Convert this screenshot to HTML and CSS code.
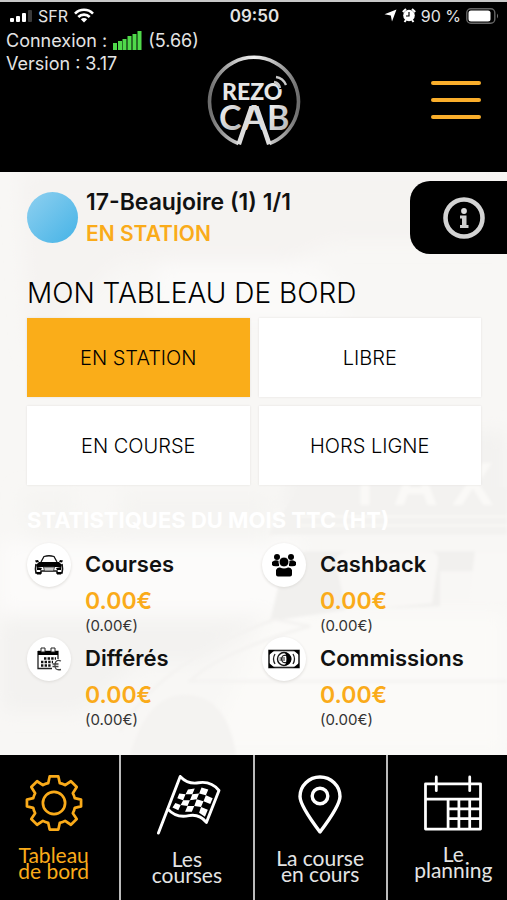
FILE: index.html
```html
<!DOCTYPE html>
<html lang="fr">
<head>
<meta charset="utf-8">
<meta name="viewport" content="width=device-width, initial-scale=1">
<title>Rezo Cab</title>
<link rel="stylesheet" href="styles.css">
</head>
<body>
<header class="header">
  <div class="status">
    <div class="status-side">
      <svg class="bars" viewBox="0 0 22 12" width="22" height="12" fill="#fff"><rect y="8" width="4" height="4" rx="1"/><rect x="6" y="6" width="4" height="6" rx="1"/><rect x="12" y="3" width="4" height="9" rx="1"/><rect x="18" width="4" height="12" rx="1" fill="#3a3a3a"/></svg>
      <span>SFR</span>
      <svg viewBox="0 0 20 15" width="20" height="15" fill="none" stroke="#fff" stroke-width="2.6"><path d="M1 5.6a12.6 12.6 0 0 1 18 0M4.3 9a8 8 0 0 1 11.4 0"/><path d="M10 14.500L6.800 11.300a4.500 4.500 0 0 1 6.400 0z" fill="#fff" stroke="none"/></svg>
    </div>
    <time class="clock">09:50</time>
    <div class="status-side status-right">
      <svg viewBox="0 0 13 13" width="13" height="13" fill="#fff"><path d="M12.500.5L8 12.500 6.800 6.500.5 5.300z"/></svg>
      <svg viewBox="0 0 14 15" width="14" height="15"><circle cx="7" cy="7.500" r="5.800" fill="#fff"/><path d="M.8 4L4 1M13.200 4L10 1M2.500 14l1.500-2M11.500 14L10 12" stroke="#fff" stroke-width="2"/><path d="M7 4v4H4" stroke="#000" fill="none" stroke-width="1.200"/></svg>
      <span>90 %</span>
      <svg viewBox="0 0 33 16" width="33" height="16"><rect x=".8" y=".8" width="28" height="14.400" rx="4" fill="none" stroke="#666" stroke-width="1.400"/><rect x="2.500" y="2.500" width="22" height="11" rx="2.500" fill="#fff"/><path d="M31 5.500q2 2.500 0 5z" fill="#777"/></svg>
    </div>
  </div>
  <div class="conn">
    <div class="conn-row"><span>Connexion :</span>
      <svg viewBox="0 0 29 19" width="29" height="19" fill="#4fd94a"><rect y="12" width="4" height="7"/><rect x="5" y="10" width="4" height="9"/><rect x="9.500" y="8" width="4" height="11"/><rect x="14.500" y="5" width="4" height="14"/><rect x="19.500" y="3" width="4" height="16"/><rect x="24.500" width="4" height="19"/></svg>
      <span>(5.66)</span></div>
    <div class="conn-row">Version : 3.17</div>
  </div>
  <svg class="logo" viewBox="0 0 94 94" width="94" height="94" role="img" aria-label="Rezo Cab">
    <defs><linearGradient id="metal" x1="0" y1="0" x2="1" y2="0"><stop offset="0" stop-color="#6d6d6d"/><stop offset=".3" stop-color="#c9c9c9"/><stop offset=".5" stop-color="#f1f1f1"/><stop offset=".7" stop-color="#c4c4c4"/><stop offset="1" stop-color="#6d6d6d"/></linearGradient>
    <linearGradient id="metal2" x1="0" y1="0" x2="1" y2="1"><stop offset="0" stop-color="#fff"/><stop offset="1" stop-color="#aaa"/></linearGradient></defs>
    <path d="M31.500 89.500A44.500 44.500 0 1 1 62.500 89.500" fill="none" stroke="url(#metal)" stroke-width="3.600"/>
    <text x="15" y="46" class="logo-rezo" fill="#e6e6e6">REZO</text>
    <text x="12" y="76" class="logo-cab" fill="url(#metal2)">C</text>
    <text x="60" y="76" class="logo-cab" fill="url(#metal2)">B</text>
    <text x="47" y="76" class="logo-cab logo-a" fill="#dedede">A</text>
    <path d="M42.500 52h4.500L34 91l-4.500-1.500zM51.500 52H47l13 39 4.500-1.500z" fill="#dedede"/>
    <path d="M65 27q8 1 9 8" fill="none" stroke="#000" stroke-width="3"/>
    <path d="M67 28q5 1 6 6M69 23q7 1 10 8" fill="none" stroke="#c9c9c9" stroke-width="2.400"/>
  </svg>
  <button class="menu" aria-label="Menu"><i></i><i></i><i></i></button>
</header>

<main class="main">
  <svg class="backdrop" viewBox="0 0 507 584" preserveAspectRatio="none" aria-hidden="true">
    <defs><filter id="soft"><feGaussianBlur stdDeviation="9"/></filter><filter id="edge"><feGaussianBlur stdDeviation="1.500"/></filter></defs>
    <rect width="507" height="584" fill="#f8f7f5"/>
    <g filter="url(#soft)">
      <path d="M20 0H507V70H330L290 90H120L30 180z" fill="#f5f3f1"/>
      <path d="M160 90H290Q340 90 345 150H150z" fill="#fbfaf9"/>
      <path d="M20 320H75V350H120V320H270V380L30 370z" fill="#f5f4f2"/>
      <path d="M0 450H260L200 490H140L80 540H0z" fill="#f3f2f0"/>
      <path d="M0 370H300V440H0z" fill="#fcfbfa"/>
      <path d="M270 440H507V584H200z" fill="#fbfaf8"/>
      <path d="M300 260H507V340H280z" fill="#f3f2f0"/>
    </g>
    <g filter="url(#edge)">
      <path d="M300 316H507V363H268z" fill="#f3f2f0"/>
      <path d="M304 380H507V400H440V435L350 438 270 450 282 400z" fill="#f1f0ee"/>
      <path d="M336 392q1-12 14-12h78q12 0 10 12l-6 40-86 8z" fill="#f9f8f6"/>
      <path d="M475 380h32v50h-38z" fill="#f9f8f6"/>
      <path d="M300 345H507M300 354H507" stroke="#f9f8f6" stroke-width="2"/>
      <path d="M120 560Q160 490 275 448L310 455Q220 480 190 510H507" fill="none" stroke="#f4f3f1" stroke-width="3"/>
      <path d="M130 584q18-64 60-60 38 4 46 60z" fill="#f4f3f1"/>
      <text x="346" y="334" class="taxi">TAX</text>
    </g>
  </svg>

  <section class="station">
    <span class="dot"></span>
    <div class="station-text"><strong class="place">17-Beaujoire (1) 1/1</strong><strong class="amber">EN STATION</strong></div>
    <button class="info" aria-label="Informations">
      <svg viewBox="0 0 44 44" width="44" height="44"><circle cx="22" cy="22" r="18.500" fill="none" stroke="#d4d4d4" stroke-width="4.600"/><circle cx="22" cy="15" r="2.900" fill="#ddd"/><path d="M18 19.500h6.500v9.500h2v3h-8.500v-3h2v-6.500h-2z" fill="#cfcfcf"/></svg>
    </button>
  </section>

  <h1 class="title">MON TABLEAU DE BORD</h1>
  <div class="modes">
    <button class="mode active">EN STATION</button>
    <button class="mode">LIBRE</button>
    <button class="mode">EN COURSE</button>
    <button class="mode">HORS LIGNE</button>
  </div>

  <h2 class="stats-title">STATISTIQUES DU MOIS TTC (HT)</h2>
  <div class="stats">
    <article class="stat">
      <span class="badge"><svg viewBox="0 0 30 22" width="30" height="22"><path d="M7 8l3-5.500q5-1.500 10 0L23 8" fill="none" stroke="#111" stroke-width="1.300"/><path d="M5 8h20l3 3-1 2H3l-1-2z" fill="#000"/><path d="M1 6.500l3-.5 1 2-3 .500zM29 6.500l-3-.5-1 2 3 .500z"/><path d="M2 10q-1 5 0 9h5v-2h16v2h5q1-4 0-9" fill="none" stroke="#111" stroke-width="1.600"/><path d="M9.500 13h11l-1 4h-9z" fill="#ccc" stroke="#333" stroke-width=".8"/><path d="M3 13l5 1-1 2H3zM27 13l-5 1 1 2h4zM2 18h5v2.500H3zM28 18h-5v2.500h4z"/></svg></span>
      <div><h3>Courses</h3><p class="amount">0.00€</p><p class="net">(0.00€)</p></div>
    </article>
    <article class="stat">
      <span class="badge"><svg viewBox="0 0 26 24" width="26" height="24"><circle cx="6" cy="4" r="3"/><circle cx="20" cy="4" r="3"/><path d="M1 9q3-3 7-1v5q-6 1-7-1zM25 9q-3-3-7-1v5q6 1 7-1z"/><circle cx="13" cy="9" r="5" stroke="#fff" stroke-width="1"/><path d="M5 17q1-3 4-2.500 4 2 8 0 3-.5 4 2.500v4.500q0 2-2 2H7q-2 0-2-2z"/></svg></span>
      <div><h3>Cashback</h3><p class="amount">0.00€</p><p class="net">(0.00€)</p></div>
    </article>
    <article class="stat">
      <span class="badge"><svg viewBox="0 0 26 26" width="26" height="26"><path d="M2 5.500h20V13M2 5v17.500h14" fill="none" stroke="#222" stroke-width="1.300"/><path d="M2 5h20v4H2z"/><path d="M5 2h4v4H5zM15 2h4v4h-4z" fill="#fff" stroke="#222"/><path d="M8 12.500h12M5 16h12M5 19.500h10" stroke="#111" stroke-width="2.400" stroke-dasharray="2.400 1.200"/><path d="M25 15q-5-2-6 3-1 7 6 5.500M16.500 18h6M16.500 20.500h6" fill="none" stroke="#444" stroke-width="1.300"/></svg></span>
      <div><h3>Différés</h3><p class="amount">0.00€</p><p class="net">(0.00€)</p></div>
    </article>
    <article class="stat">
      <span class="badge"><svg viewBox="0 0 32 20" width="32" height="20"><rect x="1" y="1.500" width="30" height="17" fill="#fff" stroke="#222" stroke-width="1.600"/><path d="M1 1h6L1 6zM31 1h-6l6 5zM1 19h6l-6-5zM31 19h-6l6-5z"/><path d="M7 5q-3 5 0 10M25 5q3 5 0 10" fill="none" stroke="#222" stroke-width="1.300"/><circle cx="16" cy="10" r="6.500" fill="#fff" stroke="#111" stroke-width="1.400"/><path d="M17 3.500a6.500 6.500 0 0 1 0 13q3-6 0-13z"/><path d="M18 6.500q-4-1-4.500 3.500.5 4.500 4.500 3.500M11.500 9H17M11.500 11H17" fill="none" stroke="#222" stroke-width="1.200"/></svg></span>
      <div><h3>Commissions</h3><p class="amount">0.00€</p><p class="net">(0.00€)</p></div>
    </article>
  </div>
</main>

<nav class="tabs">
  <a href="#tableau" class="tab current">
    <svg viewBox="0 0 60 60" width="58" height="58" fill="none" stroke="#faab1a" stroke-width="2.800" stroke-linejoin="round"><circle cx="30" cy="30" r="11.500"/><path d="M25.500 2.500h9l1.500 7q3 .5 5.500 2l6-4 6 6-4 6.500q1.500 2.500 2 5l6.500 1.500v7l-6.500 1.500q-.5 3-2 5.500l4 6-6 6-6-4q-2.500 1.500-5.500 2l-1.500 7h-9L24 50.500q-3-.5-5.500-2l-6 4-6-6 4-6q-1.500-2.500-2-5.500L2 33.500v-7L8.500 25q.5-2.500 2-5l-4-6.500 6-6 6 4q2.500-1.500 5.500-2z"/></svg>
    <span>Tableau<br>de bord</span>
  </a>
  <a href="#courses" class="tab">
    <svg viewBox="0 0 68 64" width="68" height="62" fill="none" stroke="#fff" stroke-width="3" stroke-linejoin="round" stroke-linecap="round"><path d="M4.500 61L27 2.500Q35 11 46 9q13-2 21 8L54 50Q47 41 36 43 23 46 14 36"/><path fill="#fff" stroke="none" d="M35 16l7-1-2.500 6-7 0zM49 14l7 2-2.500 6-7-2zM26 20l6.500 1-2.500 6-6-2zM39.500 21l7-1-2.500 6-7 1zM53.500 22l7 3-2.500 6-7-3zM30 27l7 0-2.500 6-7-1zM44 26l7 2-2.500 6-7-1zM22 30l5.500 2-2.500 5.500-6-3zM34.500 33l7 0-2.500 6-7 0zM48.500 34l7 3-3 7-6-4z"/></svg>
    <span>Les<br>courses</span>
  </a>
  <a href="#en-cours" class="tab">
    <svg viewBox="0 0 46 60" width="46" height="61" fill="none" stroke="#fff" stroke-width="3.400" stroke-linejoin="round"><path d="M23 57.500Q3 31 3 22a20 19.500 0 0 1 40 0Q43 31 23 57.500z"/><circle cx="23" cy="21.500" r="7.800"/></svg>
    <span>La course<br>en cours</span>
  </a>
  <a href="#planning" class="tab">
    <svg viewBox="0 0 60 58" width="60" height="57" fill="none" stroke="#fff" stroke-width="2.800" stroke-linecap="round"><path d="M2 10H58V56H2zM2 25.500H58M13 3V17M47 3V17M25 25.500V56M36 25.500V56M47 25.500V56M25 35.500H58M25 45.500H58" stroke-linejoin="round"/></svg>
    <span>Le<br>planning</span>
  </a>
</nav>
</body>
</html>
```
FILE: styles.css
```css
* { box-sizing: border-box; }
body {
  margin: 0;
  min-height: 100vh;
  display: flex;
  flex-direction: column;
  font-family: Inter, "Liberation Sans", sans-serif;
  color: #111;
  background: #f8f7f5;
}
h1, h2, h3, p { margin: 0; }
button { font: inherit; border: 0; cursor: pointer; }
svg { display: block; flex: none; }

.header {
  position: relative;
  height: 172px;
  background: #000;
  color: #e4e4e4;
  border-top: 2px solid #c8c8c8;
}
.status {
  display: grid;
  grid-template-columns: 1fr auto 1fr;
  align-items: center;
  height: 27px;
  padding: 0 8px 0 10px;
  font-size: 16px;
}
.status-side { display: flex; align-items: center; gap: 6px; }
.status-right { justify-content: flex-end; gap: 5px; }
.clock { font-weight: 600; font-size: 17px; }
.conn { padding-left: 6px; font-size: 18px; line-height: 23px; }
.conn-row { display: flex; align-items: center; gap: 6px; }
.logo { position: absolute; top: 52px; left: 50%; transform: translateX(-50%); }
.logo-rezo { font: 900 23px Lato, sans-serif; }
.logo-cab { font: 700 34px Lato, sans-serif; }
.logo-a { text-anchor: middle; }
.menu {
  position: absolute;
  top: 79px;
  right: 26px;
  width: 50px;
  padding: 0;
  display: grid;
  gap: 13px;
  background: none;
}
.menu i { height: 4px; border-radius: 2px; background: #faae2b; }

.main { position: relative; flex: 1; padding: 9px 0 18px 27px; }
.backdrop { position: absolute; inset: 0; width: 100%; height: 100%; }
.main > :not(.backdrop) { position: relative; }
.taxi { font: 700 62px "Liberation Sans", sans-serif; letter-spacing: 14px; fill: #faf9f7; }

.station { display: flex; align-items: center; }
.dot {
  width: 51px;
  height: 51px;
  border-radius: 50%;
  background: linear-gradient(135deg, #8fd0f0, #45b3e6);
}
.station-text {
  flex: 1;
  display: grid;
  margin-left: 8px;
  font-size: 21px;
  line-height: 32px;
}
.station strong { font-weight: 600; }
.station .place { font-size: 23px; }
.station .amber { color: #faab1a; }
.info {
  width: 97px;
  height: 73px;
  padding: 0 0 0 32px;
  background: #000;
  border-radius: 20px 0 0 20px;
}
.title { margin-top: 21px; font-size: 28px; font-weight: 300; line-height: 36px; color: #000; }
.modes {
  display: grid;
  grid-template-columns: 1fr 1fr;
  gap: 9px;
  margin: 7px 26px 0 0;
}
.mode {
  height: 79px;
  padding: 0;
  font-size: 20px;
  font-weight: 300;
  color: #000;
  background: #fff;
  box-shadow: 0 0 2px #e2e0de;
}
.mode.active { background: #faad19; }
.stats-title {
  margin-top: 22px;
  font-size: 22px;
  font-weight: 700;
  line-height: 26px;
  color: #fff;
}
.stats {
  display: grid;
  grid-template-columns: 235px 1fr;
  row-gap: 2px;
  margin-top: 10px;
}
.stat { display: flex; gap: 14px; }
.badge {
  width: 44px;
  height: 44px;
  display: grid;
  place-items: center;
  border-radius: 50%;
  background: #fff;
  box-shadow: 0 1px 3px #dddbd8;
}
.stat h3 { font-size: 22px; font-weight: 600; line-height: 42px; }
.amount { font-size: 23px; font-weight: 600; line-height: 32px; color: #faab1a; }
.net { font-size: 15px; line-height: 18px; color: #333; }

.tabs {
  display: grid;
  grid-template-columns: 10fr 11fr 11fr 10fr;
  gap: 2px;
  height: 145px;
  background: #bbb;
}
.tab {
  display: flex;
  flex-direction: column;
  align-items: center;
  gap: 15px;
  padding: 19px 0 0;
  background: #000;
  color: #e4e4e4;
  font: 21px/16px Lato, "Open Sans", sans-serif;
  text-align: center;
  text-decoration: none;
}
.tab.current { color: #faab1a; }
.tab:first-child { padding-right: 12px; }
.tab:last-child { padding-left: 12px; }
```
